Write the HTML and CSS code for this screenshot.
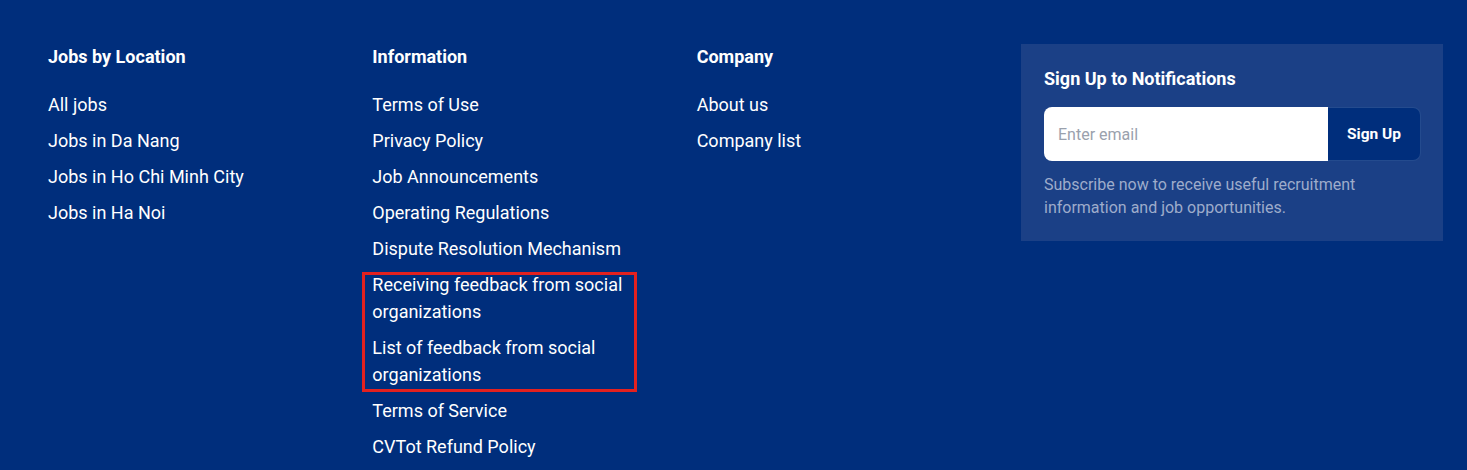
FILE: index.html
```html
<!DOCTYPE html>
<html lang="en">
<head>
<meta charset="utf-8">
<title>Footer</title>
<link rel="stylesheet" href="styles.css">
</head>
<body>
<footer class="footer">
  <div class="footer-grid">
    <div class="col">
      <h3 class="col-title">Jobs by Location</h3>
      <ul class="links">
        <li><a href="#">All jobs</a></li>
        <li><a href="#">Jobs in Da Nang</a></li>
        <li><a href="#">Jobs in Ho Chi Minh City</a></li>
        <li><a href="#">Jobs in Ha Noi</a></li>
      </ul>
    </div>
    <div class="col">
      <h3 class="col-title">Information</h3>
      <ul class="links">
        <li><a href="#">Terms of Use</a></li>
        <li><a href="#">Privacy Policy</a></li>
        <li><a href="#">Job Announcements</a></li>
        <li><a href="#">Operating Regulations</a></li>
        <li><a href="#">Dispute Resolution Mechanism</a></li>
        <li class="highlight">
          <ul class="links">
            <li><a href="#">Receiving feedback from social organizations</a></li>
            <li><a href="#">List of feedback from social organizations</a></li>
          </ul>
        </li>
        <li><a href="#">Terms of Service</a></li>
        <li><a href="#">CVTot Refund Policy</a></li>
      </ul>
    </div>
    <div class="col">
      <h3 class="col-title">Company</h3>
      <ul class="links">
        <li><a href="#">About us</a></li>
        <li><a href="#">Company list</a></li>
      </ul>
    </div>
    <div class="signup">
      <h3 class="signup-title">Sign Up to Notifications</h3>
      <form class="signup-form">
        <input class="signup-input" type="email" placeholder="Enter email">
        <button class="signup-btn" type="button">Sign Up</button>
      </form>
      <p class="signup-note">Subscribe now to receive useful recruitment information and job opportunities.</p>
    </div>
  </div>
</footer>
</body>
</html>
```

FILE: styles.css
```css
*, *::before, *::after { box-sizing: border-box; }
html, body {
  margin: 0;
  padding: 0;
  background: #002e7c;
  font-family: Roboto, "Liberation Sans", sans-serif;
  color: #ffffff;
}
.footer {
  padding: 44px 24px 0 48px;
  height: 470px;
  overflow: hidden;
}
.footer-grid {
  display: grid;
  grid-template-columns: repeat(3, 1fr) 422px;
  align-items: start;
}
.col-title {
  margin: 0 0 21px;
  font-size: 18px;
  font-weight: 700;
  line-height: 26px;
}
.links {
  list-style: none;
  margin: 0;
  padding: 0;
}
.links > li {
  font-size: 18px;
  line-height: 27px;
  margin-bottom: 9px;
  padding-right: 60px;
}
.links a {
  color: #ffffff;
  text-decoration: none;
}
.links .highlight {
  position: relative;
  padding-right: 0;
}
.highlight > .links > li:last-child {
  margin-bottom: 0;
}
.highlight::after {
  content: "";
  position: absolute;
  top: 1px;
  bottom: -4px;
  left: -10px;
  width: 275px;
  border: 3px solid #e3211f;
  pointer-events: none;
}
.signup {
  background: #1b4086;
  padding: 23px 22px 22px 23px;
}
.signup-title {
  margin: 0 0 16px;
  font-size: 18px;
  font-weight: 700;
  line-height: 24px;
}
.signup-form {
  display: flex;
  height: 54px;
  margin: 0;
}
.signup-input {
  flex: 1;
  min-width: 0;
  height: 54px;
  border: 0;
  border-radius: 8px 0 0 8px;
  background: #ffffff;
  padding: 0 14px;
  font-family: inherit;
  font-size: 16px;
  color: #333;
  outline: none;
}
.signup-input::placeholder {
  color: #9aa1ad;
}
.signup-btn {
  width: 93px;
  height: 54px;
  border: 1px solid rgba(255, 255, 255, 0.14);
  border-left: 0;
  border-radius: 0 8px 8px 0;
  background: #002e7c;
  color: #ffffff;
  font-family: inherit;
  font-size: 15.5px;
  font-weight: 700;
  cursor: pointer;
}
.signup-note {
  margin: 12px 0 0;
  font-size: 16px;
  line-height: 23px;
  color: #9eaccb;
}
```
